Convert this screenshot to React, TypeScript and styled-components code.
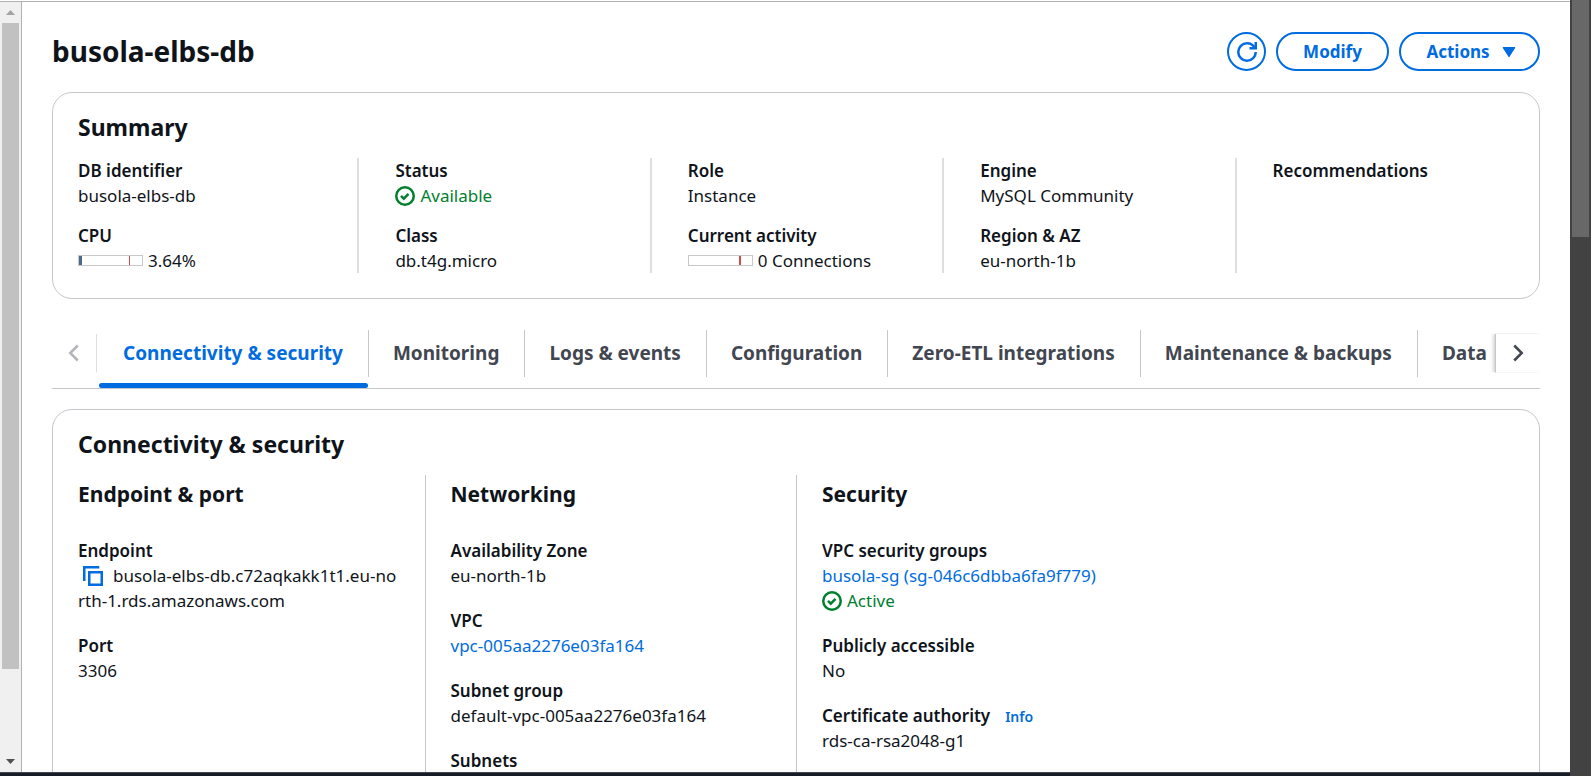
import React from "react";
import styled, { createGlobalStyle } from "styled-components";

const GlobalStyle = createGlobalStyle`
  *, *::before, *::after { box-sizing: border-box; }
  body {
    margin: 0;
    background: #fff;
    color: #0f141a;
    font-family: "Noto Sans", "Open Sans", sans-serif;
    font-size: 17px;
    line-height: 25px;
  }
  h1, h2, h3, dl, dd, dt, ul, p { margin: 0; padding: 0; }
  button { font: inherit; cursor: pointer; }
`;

const Shell = styled.div`
  display: grid;
  grid-template-columns: 22px minmax(0, 1fr) 21px;
  grid-template-rows: minmax(0, 1fr) 4px;
  height: 100vh;
  overflow: hidden;
`;

const PanelScroll = styled.div`
  display: flex;
  flex-direction: column;
  align-items: center;
  margin-top: 1px;
  background: #f0f0f0;
  border-top: 1px solid #aeb2b2;
  border-right: 1px solid #b0b3b3;
`;

const PanelThumb = styled.div`
  flex: 646;
  width: 17px;
  background: #c1c1c1;
`;

const PanelRest = styled.div`
  flex: 82;
`;

const StepButton = styled.button`
  display: flex;
  align-items: center;
  justify-content: center;
  width: 21px;
  height: 21px;
  padding: 0;
  border: 0;
  background: none;
`;

const WindowScroll = styled.div`
  grid-column: 3;
  grid-row: 1 / 3;
  padding: 0 2px;
  background: #424242;
`;

const WindowThumb = styled.div`
  height: 237px;
  background: #686868;
`;

const BottomBar = styled.footer`
  grid-column: 1 / 3;
  grid-row: 2;
  background: #161d26;
  border-top: 1px solid #424650;
`;

const Main = styled.main`
  overflow: hidden;
  margin-top: 1px;
  padding: 30px 30px 0;
  border-top: 1px solid #aeb2b2;
`;

const TitleBar = styled.header`
  display: flex;
  align-items: flex-start;
  justify-content: space-between;
  margin-bottom: 21px;
`;

const Title = styled.h1`
  font-size: 28px;
  line-height: 38px;
  font-weight: 700;
`;

const ButtonGroup = styled.div`
  display: flex;
  gap: 10px;
`;

const Pill = styled.button<{ $width: number; $menu?: boolean }>`
  display: flex;
  align-items: center;
  justify-content: center;
  gap: 9px;
  width: ${(p) => p.$width}px;
  height: 39px;
  padding: 0 0 0 ${(p) => (p.$menu ? 6 : 0)}px;
  border: 2px solid #006ce0;
  border-radius: 20px;
  background: #fff;
  color: #006ce0;
  font-weight: 700;
  line-height: 24px;
`;

const Card = styled.section`
  border: 1px solid #c6c6cd;
  border-radius: 20px;
  background: #fff;
`;

const CardTitle = styled.h2`
  padding: 19px 25px 16px;
  font-size: 23px;
  line-height: 30px;
  font-weight: 700;
`;

const SummaryGrid = styled.div`
  display: grid;
  grid-template-columns: repeat(5, minmax(0, 1fr));
  margin: 0 12px 25px;
`;

const SummaryColumn = styled.dl`
  display: flex;
  flex-direction: column;
  gap: 15px;
  min-height: 115px;
  padding: 0 13px 0 36px;
  border-left: 2px solid #dedee3;

  &:first-child {
    padding-left: 13px;
    border-left: 0;
  }
`;

const Label = styled.dt`
  font-weight: 600;
`;

const Value = styled.dd`
  overflow-wrap: anywhere;
`;

const Line = styled.span`
  display: flex;
  align-items: center;
  gap: 5px;
`;

const Status = styled(Line)`
  color: #00802f;
`;

const Meter = styled.span`
  position: relative;
  width: 65px;
  height: 11px;
  border: 1px solid #c8c8c8;
`;

const MeterFill = styled.span`
  position: absolute;
  inset: 0 auto 0 0;
  background: #4a6b8a;
`;

const MeterLimit = styled.span<{ $thick: boolean }>`
  position: absolute;
  inset: 0 auto 0 50px;
  width: ${(p) => (p.$thick ? 2 : 1)}px;
  background: #d9484c;
`;

const TabBar = styled.nav`
  display: flex;
  align-items: center;
  height: 59px;
  margin: 31px 0 20px;
  border-bottom: 1px solid #c6c6cd;
`;

const TabArrow = styled.button<{ $side: "left" | "right" }>`
  display: flex;
  flex: none;
  align-items: center;
  justify-content: center;
  width: 45px;
  height: 39px;
  padding: 0;
  margin-bottom: 12px;
  border: 0;
  background: #fff;
  color: ${(p) => (p.$side === "left" ? "#b4b4bb" : "#424650")};
  border-left: ${(p) => (p.$side === "right" ? "1px solid #c6c6cd" : "0")};
  border-right: ${(p) => (p.$side === "left" ? "1px solid #dedee3" : "0")};
  box-shadow: ${(p) => (p.$side === "right" ? "-1px 0 4px rgba(0, 7, 22, 0.25)" : "none")};
  clip-path: inset(0 0 0 -8px);
`;

const TabList = styled.div`
  display: flex;
  flex: 1;
  height: 58px;
  padding-left: 2px;
  overflow: hidden;
`;

const Tab = styled.button<{ $active: boolean }>`
  position: relative;
  flex: none;
  height: 58px;
  padding: 0 26px 12px 24px;
  border: 0;
  background: none;
  color: ${(p) => (p.$active ? "#006ce0" : "#424650")};
  font-size: 19px;
  font-weight: 700;
  white-space: nowrap;

  &:not(:last-child)::before {
    content: "";
    position: absolute;
    top: 0;
    right: 0;
    width: 1px;
    height: 47px;
    background: #c6c6cd;
  }

  &::after {
    content: "";
    display: ${(p) => (p.$active ? "block" : "none")};
    position: absolute;
    inset: auto 1px 0 0;
    height: 5px;
    border-radius: 3px;
    background: #006ce0;
  }
`;

const DetailGrid = styled.div`
  display: grid;
  grid-template-columns: repeat(4, minmax(0, 1fr));
`;

const DetailColumn = styled.section`
  padding: 4px 25px 25px;
  border-left: 1px solid #c6c6cd;

  &:first-child {
    border-left: 0;
  }
`;

const DetailTitle = styled.h3`
  margin-bottom: 29px;
  font-size: 21px;
  line-height: 30px;
  font-weight: 700;
`;

const DetailList = styled.dl`
  display: flex;
  flex-direction: column;
  gap: 20px;
`;

const Endpoint = styled(Value)`
  word-break: break-all;
`;

const CopyButton = styled.button`
  display: inline-flex;
  align-items: center;
  height: 25px;
  padding: 0 5px;
  margin-right: 5px;
  border: 0;
  background: none;
  color: #006ce0;
  vertical-align: top;
`;

const Link = styled.a`
  color: #006ce0;
  text-decoration: none;
`;

const InfoLink = styled(Link)`
  margin-left: 15px;
  font-size: 14px;
  line-height: 20px;
`;

const Glyph = styled.svg<{ $stroke?: number }>`
  display: inline-block;
  flex: none;
  width: 20px;
  height: 20px;
  fill: none;
  stroke: currentColor;
  stroke-width: ${(p) => p.$stroke ?? 2};
  vertical-align: middle;
`;

const RefreshIcon = () => (
  <Glyph viewBox="0 0 16 16" aria-hidden="true">
    <path d="M15 8c0 3.87-3.13 7-7 7s-7-3.13-7-7 3.13-7 7-7c2.79 0 5.2 1.63 6.33 4" />
    <path d="M10 5h5V0" />
  </Glyph>
);

const CaretIcon = () => (
  <Glyph viewBox="0 0 16 16" aria-hidden="true" $stroke={1}>
    <path d="M3.5 4.5h9L8 11.6z" fill="currentColor" strokeLinejoin="round" />
  </Glyph>
);

const CheckIcon = () => (
  <Glyph viewBox="0 0 16 16" aria-hidden="true">
    <circle cx="8" cy="8" r="7" />
    <path d="m4.8 7.9 2.2 2.2 3.8-3.8" />
  </Glyph>
);

const CopyIcon = () => (
  <Glyph viewBox="0 0 16 16" aria-hidden="true">
    <path d="M5 5h10v10H5z" />
    <path d="M13 1H1v11" />
  </Glyph>
);

const ChevronIcon = ({ left = false }: { left?: boolean }) => (
  <Glyph viewBox="0 0 16 16" aria-hidden="true">
    <path d={left ? "m11 2-6 6 6 6" : "m5 2 6 6-6 6"} />
  </Glyph>
);

const StepIcon = ({ down = false }: { down?: boolean }) => (
  <svg width="9" height="5" viewBox="0 0 9 5" aria-hidden="true">
    <path d={down ? "M0 0h9L4.5 5z" : "M0 5h9L4.5 0z"} fill={down ? "#505050" : "#a3a3a3"} />
  </svg>
);

const Field = ({ label, info, children }: { label: string; info?: boolean; children?: React.ReactNode }) => (
  <div>
    <Label>
      {label}
      {info && <InfoLink href="#info">Info</InfoLink>}
    </Label>
    {children && <Value>{children}</Value>}
  </div>
);

const Usage = ({ name, percent, thick, children }: { name: string; percent: number; thick: boolean; children: React.ReactNode }) => (
  <Line>
    <Meter role="meter" aria-label={name} aria-valuenow={percent} aria-valuemin={0} aria-valuemax={100}>
      <MeterFill style={{ width: `${Math.ceil(percent * 0.63)}px` }} />
      <MeterLimit $thick={thick} />
    </Meter>
    {children}
  </Line>
);

const tabs = [
  "Connectivity & security",
  "Monitoring",
  "Logs & events",
  "Configuration",
  "Zero-ETL integrations",
  "Maintenance & backups",
  "Data",
];

export default function App() {
  const [active, setActive] = React.useState(tabs[0]);

  return (
    <>
      <GlobalStyle />
      <Shell>
        <PanelScroll>
          <StepButton aria-label="Scroll up"><StepIcon /></StepButton>
          <PanelThumb />
          <PanelRest />
          <StepButton aria-label="Scroll down"><StepIcon down /></StepButton>
        </PanelScroll>

        <Main>
          <TitleBar>
            <Title>busola-elbs-db</Title>
            <ButtonGroup>
              <Pill $width={39} aria-label="Refresh"><RefreshIcon /></Pill>
              <Pill $width={113}>Modify</Pill>
              <Pill $width={141} $menu>Actions <CaretIcon /></Pill>
            </ButtonGroup>
          </TitleBar>

          <Card>
            <CardTitle>Summary</CardTitle>
            <SummaryGrid>
              <SummaryColumn>
                <Field label="DB identifier">busola-elbs-db</Field>
                <Field label="CPU"><Usage name="CPU" percent={3.64} thick={false}>3.64%</Usage></Field>
              </SummaryColumn>
              <SummaryColumn>
                <Field label="Status"><Status><CheckIcon />Available</Status></Field>
                <Field label="Class">db.t4g.micro</Field>
              </SummaryColumn>
              <SummaryColumn>
                <Field label="Role">Instance</Field>
                <Field label="Current activity"><Usage name="Connections" percent={0} thick>0 Connections</Usage></Field>
              </SummaryColumn>
              <SummaryColumn>
                <Field label="Engine">MySQL Community</Field>
                <Field label="Region & AZ">eu-north-1b</Field>
              </SummaryColumn>
              <SummaryColumn>
                <Field label="Recommendations" />
              </SummaryColumn>
            </SummaryGrid>
          </Card>

          <TabBar>
            <TabArrow $side="left" aria-label="Scroll tabs left" disabled><ChevronIcon left /></TabArrow>
            <TabList role="tablist">
              {tabs.map((tab) => (
                <Tab key={tab} role="tab" aria-selected={tab === active} $active={tab === active} onClick={() => setActive(tab)}>
                  {tab}
                </Tab>
              ))}
            </TabList>
            <TabArrow $side="right" aria-label="Scroll tabs right"><ChevronIcon /></TabArrow>
          </TabBar>

          <Card>
            <CardTitle>Connectivity &amp; security</CardTitle>
            <DetailGrid>
              <DetailColumn>
                <DetailTitle>Endpoint &amp; port</DetailTitle>
                <DetailList>
                  <div>
                    <Label>Endpoint</Label>
                    <Endpoint>
                      <CopyButton aria-label="Copy endpoint"><CopyIcon /></CopyButton>
                      busola-elbs-db.c72aqkakk1t1.eu-north-1.rds.amazonaws.com
                    </Endpoint>
                  </div>
                  <Field label="Port">3306</Field>
                </DetailList>
              </DetailColumn>
              <DetailColumn>
                <DetailTitle>Networking</DetailTitle>
                <DetailList>
                  <Field label="Availability Zone">eu-north-1b</Field>
                  <Field label="VPC"><Link href="#vpc">vpc-005aa2276e03fa164</Link></Field>
                  <Field label="Subnet group">default-vpc-005aa2276e03fa164</Field>
                  <Field label="Subnets" />
                </DetailList>
              </DetailColumn>
              <DetailColumn>
                <DetailTitle>Security</DetailTitle>
                <DetailList>
                  <Field label="VPC security groups">
                    <Link href="#security-group">busola-sg (sg-046c6dbba6fa9f779)</Link>
                    <Status><CheckIcon />Active</Status>
                  </Field>
                  <Field label="Publicly accessible">No</Field>
                  <Field label="Certificate authority" info>rds-ca-rsa2048-g1</Field>
                </DetailList>
              </DetailColumn>
            </DetailGrid>
          </Card>
        </Main>

        <WindowScroll><WindowThumb /></WindowScroll>
        <BottomBar />
      </Shell>
    </>
  );
}
